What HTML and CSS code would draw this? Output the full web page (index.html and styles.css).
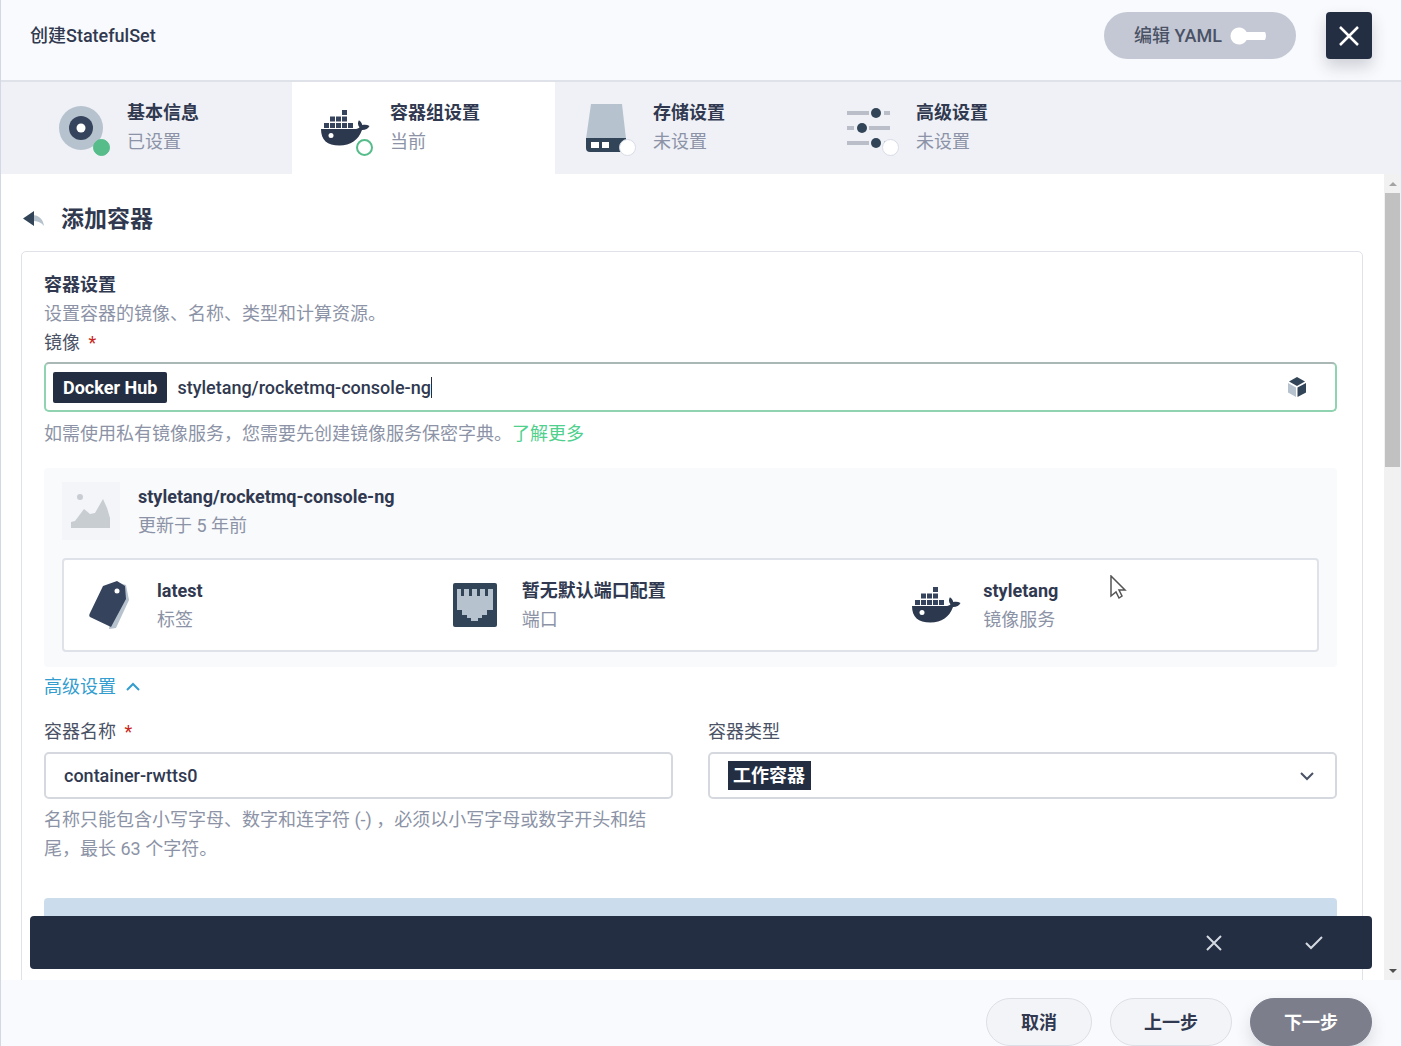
FILE: index.html
```html
<!DOCTYPE html>
<html lang="zh-CN">
<head>
<meta charset="utf-8">
<meta name="viewport" content="width=device-width, initial-scale=1">
<title>创建StatefulSet</title>
<link rel="stylesheet" href="styles.css">
</head>
<body>
<svg class="defs" aria-hidden="true">
  <symbol id="docker" viewBox="0 0 49 36">
    <path d="M21 0h5v5h-5zM9 6.500h5v5H9zM15 6.500h5v5h-5zM21 6.500h5v5h-5zM3 13h5v5H3zM9 13h5v5H9zM15 13h5v5h-5zM21 13h5v5h-5zM27 13h5v5h-5z" fill="#36435c"/>
    <path d="M0 19h33.500c2.500 0 4.300-.8 5-1.800-1.800-2-2-4.700-.6-7 2 1.200 3.100 3 3.300 4.800 2.500-.7 5.200-.4 7.300.9-1.300 2.900-4.100 4.200-7.500 4.100C37.500 30 29.500 35.500 18.500 35.500 6 35.500 0 30 0 19z" fill="#2c384e"/>
    <circle cx="10" cy="25.500" r="2.500" fill="#fff"/>
  </symbol>
</svg>

<div class="dialog">
  <header class="header">
    <h1 class="header-title">创建StatefulSet</h1>
    <label class="yaml">编辑 YAML <input class="switch" type="checkbox" role="switch"></label>
    <button class="close" type="button" aria-label="关闭">
      <svg width="22" height="22" viewBox="0 0 22 22"><path d="M2 2l18 18M20 2L2 20" stroke="#fff" stroke-width="2.500"/></svg>
    </button>
  </header>

  <nav class="tabs" aria-label="步骤">
    <div class="tab">
      <span class="tab-icon">
        <svg width="48" height="48" viewBox="0 0 48 48"><circle cx="23" cy="24" r="22" fill="#b6c2cd"/><circle cx="23" cy="24" r="12" fill="#36435c"/><circle cx="23" cy="24" r="4.500" fill="#fff"/></svg>
        <span class="dot dot-done"></span>
      </span>
      <span class="pair"><strong>基本信息</strong><span>已设置</span></span>
    </div>
    <div class="tab tab-active" aria-current="step">
      <span class="tab-icon">
        <svg width="49" height="36"><use href="#docker"/></svg>
        <span class="dot dot-current"></span>
      </span>
      <span class="pair"><strong>容器组设置</strong><span>当前</span></span>
    </div>
    <div class="tab">
      <span class="tab-icon">
        <svg width="48" height="48" viewBox="0 0 48 48"><path d="M7 0h31l4 35H2z" fill="#b6c2cd"/><path d="M2 34h40v14H6a4 4 0 0 1-4-4z" fill="#324558"/><path d="M7 38h8v6H7zM18 38h7v6h-7z" fill="#fff"/></svg>
        <span class="dot"></span>
      </span>
      <span class="pair"><strong>存储设置</strong><span>未设置</span></span>
    </div>
    <div class="tab">
      <span class="tab-icon">
        <svg width="48" height="48" viewBox="0 0 48 48"><path d="M0 9h22M37 9h6M0 24h7M22 24h21M0 39h22M37 39h6" stroke="#b9bec9" stroke-width="4"/><circle cx="29" cy="9" r="5" fill="#324558"/><circle cx="15" cy="24" r="5" fill="#324558"/><circle cx="29" cy="39" r="5" fill="#324558"/></svg>
        <span class="dot"></span>
      </span>
      <span class="pair"><strong>高级设置</strong><span>未设置</span></span>
    </div>
  </nav>

  <div class="body">
    <main class="content">
      <div class="back-row">
        <button class="back" type="button" aria-label="返回">
          <svg width="22" height="18" viewBox="0 0 22 18"><path d="M9 5c7 0 11 4 12 11-3-4-7-5-12-5z" fill="#b6c2cd"/><path d="M0 8.500L11 1v15z" fill="#324558"/></svg>
        </button>
        <h2>添加容器</h2>
      </div>

      <form class="card">
        <div class="pair"><strong>容器设置</strong><span>设置容器的镜像、名称、类型和计算资源。</span></div>
        <label class="label" for="image">镜像 <i>*</i></label>
        <div class="image-field">
          <span class="hub">Docker Hub</span>
          <input id="image" class="image-input" type="text" value="styletang/rocketmq-console-ng">
          <span class="caret"></span>
          <button class="cube" type="button" aria-label="选择镜像">
            <svg width="18" height="20" viewBox="0 0 18 20"><path d="M9 0l8 4.500L9 9 1 4.500z" fill="#324558"/><path d="M0 6l8 4.500V20l-8-4.500z" fill="#b6c2cd"/><path d="M9.500 10.500L18 6v9.500L9.500 20z" fill="#324558"/></svg>
          </button>
        </div>
        <p class="help">如需使用私有镜像服务，您需要先创建镜像服务保密字典。<a href="#">了解更多</a></p>

        <section class="image-card">
          <div class="image-head">
            <span class="thumb">
              <svg width="40" height="36" viewBox="0 0 40 36"><circle cx="9" cy="4" r="3" fill="#c9ccd3"/><path d="M0 35v-6l4-1 9-12 6 5 5-1 8-14 4 9 3 10v10z" fill="#c8cdd2"/></svg>
            </span>
            <div class="pair"><strong>styletang/rocketmq-console-ng</strong><span>更新于 5 年前</span></div>
          </div>
          <div class="facts">
            <div class="fact">
              <span class="fact-icon"><svg width="48" height="48" viewBox="0 0 48 48"><path d="M29 1l10 3 3 15-13 28-7 1z" fill="#b6c2cd"/><path d="M16 5l14-5 8 5 1 13-15 28L3 36c-1-1-1-2 0-4z" fill="#36435c"/><circle cx="30" cy="10" r="2.500" fill="#fff"/></svg></span>
              <div class="pair"><strong>latest</strong><span>标签</span></div>
            </div>
            <div class="fact">
              <span class="fact-icon"><svg width="48" height="48" viewBox="0 0 48 48"><rect x="2" y="2" width="44" height="44" rx="2" fill="#324558"/><path d="M6 8h4v7h3V8h5v7h3V8h5v7h3V8h5v7h3V8h5v21h-6v5h-5v3h-4v3h-7v-3h-4v-3h-5v-5H6z" fill="#b6c2cd"/></svg></span>
              <div class="pair"><strong>暂无默认端口配置</strong><span>端口</span></div>
            </div>
            <div class="fact">
              <span class="fact-icon"><svg width="49" height="36"><use href="#docker"/></svg></span>
              <div class="pair"><strong>styletang</strong><span>镜像服务</span></div>
              <svg class="pointer" width="18" height="25" viewBox="0 0 18 25" aria-hidden="true"><path d="M2 1v20l5-4 3 6 3-2-3-6h6z" fill="#fff" stroke="#555" stroke-width="1.500"/></svg>
            </div>
          </div>
        </section>

        <button class="advanced" type="button">高级设置
          <svg width="14" height="10" viewBox="0 0 14 10"><path d="M1 8l6-6 6 6" fill="none" stroke="#329dce" stroke-width="2"/></svg>
        </button>

        <div class="fields">
          <div>
            <label class="label" for="name">容器名称 <i>*</i></label>
            <input id="name" class="control" type="text" value="container-rwtts0">
            <p class="help">名称只能包含小写字母、数字和连字符 (-) ，必须以小写字母或数字开头和结尾，最长 63 个字符。</p>
          </div>
          <div>
            <label class="label" for="type">容器类型</label>
            <div class="select">
              <select id="type" class="control"><option>工作容器</option></select>
              <svg width="14" height="10" viewBox="0 0 14 10"><path d="M1 2l6 6 6-6" fill="none" stroke="#4a5266" stroke-width="2"/></svg>
            </div>
          </div>
        </div>
        <div class="notice"></div>
      </form>
    </main>

    <div class="scrollbar" aria-hidden="true">
      <span class="arrow arrow-up"></span>
      <span class="scroll-thumb"></span>
      <span class="arrow arrow-down"></span>
    </div>

    <div class="confirm">
      <button type="button" aria-label="取消编辑"><svg width="16" height="16" viewBox="0 0 16 16"><path d="M1 1l14 14M15 1L1 15" stroke="#d5d9e2" stroke-width="2"/></svg></button>
      <button type="button" aria-label="确认"><svg width="18" height="16" viewBox="0 0 18 16"><path d="M1 8l5 5L17 2" fill="none" stroke="#d5d9e2" stroke-width="2"/></svg></button>
    </div>
  </div>

  <footer class="footer">
    <button class="btn btn-cancel" type="button">取消</button>
    <button class="btn" type="button">上一步</button>
    <button class="btn btn-next" type="button">下一步</button>
  </footer>
</div>
</body>
</html>
```

FILE: styles.css
```css
* { box-sizing: border-box; }

body {
  margin: 0;
  font: 400 18px/29px Roboto, "Noto Sans CJK SC", sans-serif;
  color: #303950;
  background: #f9fafd;
}

h1, h2, p { margin: 0; }
button, input, select { font: inherit; color: inherit; }
button { padding: 0; border: 0; background: none; cursor: pointer; }
svg { display: block; flex: none; }
.defs { position: absolute; width: 0; height: 0; }

.dialog {
  display: flex;
  flex-direction: column;
  height: 100vh;
  border: solid #d3d8e4;
  border-width: 0 1px;
}

.header {
  display: flex;
  align-items: center;
  gap: 30px;
  padding: 12px 29px 21px;
  border-bottom: 2px solid #dfe2e8;
}
.header-title { flex: 1; font-size: 18px; font-weight: 500; }

.yaml {
  display: flex;
  align-items: center;
  justify-content: center;
  gap: 8px;
  width: 192px;
  height: 47px;
  border-radius: 24px;
  background: #c4c8d4;
  font-weight: 500;
  color: #4a5266;
}
.switch {
  appearance: none;
  width: 36px;
  height: 18px;
  margin: 0;
  border-radius: 9px;
  background:
    radial-gradient(circle at 9px 9px, #fff 8px, transparent 9px),
    linear-gradient(#fff, #fff) 12px 5px / 24px 8px no-repeat;
}

.close {
  display: grid;
  place-items: center;
  width: 46px;
  height: 47px;
  border-radius: 4px;
  background: #242e42;
  box-shadow: 0 8px 16px rgba(36, 46, 66, .2);
}

.tabs {
  display: flex;
  padding-left: 28px;
  background: #eff1f7;
}
.tab {
  display: flex;
  gap: 20px;
  width: 263px;
  padding: 16px 0 16px 28px;
}
.tab-active { background: #fff; }
.tab-icon {
  position: relative;
  display: grid;
  place-items: center;
  width: 50px;
  height: 60px;
}
.dot {
  position: absolute;
  right: -3px;
  bottom: 2px;
  width: 17px;
  height: 17px;
  border: 1px solid #d8dce6;
  border-radius: 50%;
  background: #fff;
}
.dot-done { background: #55bc8a; border-color: #55bc8a; }
.dot-current { border: 2px solid #55bc8a; }

.pair { display: flex; flex-direction: column; color: #8c93a6; }
.pair strong { font-weight: 700; color: #303950; }

.body {
  position: relative;
  display: flex;
  flex: 1;
  min-height: 0;
  background: #fff;
}
.content { flex: 1; min-width: 0; overflow: hidden; padding: 26px 21px 0 20px; }

.back-row { display: flex; align-items: center; gap: 16px; height: 38px; margin-bottom: 13px; padding-left: 2px; }
.back-row h2 { font-size: 23px; font-weight: 700; }

.card {
  height: 100%;
  padding: 18px 25px 0 22px;
  border: 1px solid #dfe2e8;
  border-radius: 5px;
}

.label { display: block; color: #4a5266; }
.label i { margin-left: 4px; font-style: normal; color: #ca2621; }

.image-field {
  display: flex;
  align-items: center;
  height: 50px;
  margin: 5px 0 7px;
  padding: 0 29px 0 7px;
  border: 2px solid #8fd3b0;
  border-top-color: #a9b8b4;
  border-radius: 5px;
}
.hub {
  margin-right: 10px;
  padding: 1px 10px;
  border-radius: 2px;
  background: #242e42;
  font-weight: 700;
  color: #fff;
}
.image-input {
  field-sizing: content;
  padding: 0;
  border: 0;
  outline: 0;
  background: none;
  font-weight: 500;
}
.caret { width: 1px; height: 21px; background: #242e42; }
.cube { margin-left: auto; }

.help { color: #8c93a6; }
.help a { color: #4fd08d; text-decoration: none; }

.image-card {
  margin: 20px 0 5px;
  padding: 14px 18px 15px;
  border-radius: 4px;
  background: #f9fafc;
}
.image-head { display: flex; gap: 18px; margin-bottom: 18px; }
.thumb {
  display: grid;
  place-items: center;
  width: 58px;
  height: 58px;
  background: #f3f5f8;
}
.facts {
  display: grid;
  grid-template-columns: 388fr 463fr 406fr;
  height: 94px;
  border: 2px solid #dfe2e8;
  border-radius: 4px;
  background: #fff;
}
.fact { position: relative; display: flex; align-items: center; gap: 22px; }
.fact:first-child { padding-left: 22px; }
.fact-icon { display: grid; place-items: center; width: 49px; height: 49px; }
.pointer { position: absolute; left: 197px; top: 15px; }

.advanced { display: flex; align-items: center; gap: 10px; color: #329dce; }

.fields {
  display: grid;
  grid-template-columns: 1fr 1fr;
  gap: 35px;
  margin: 16px 0 35px;
}
.control {
  display: block;
  width: 100%;
  height: 47px;
  margin: 6px 0;
  padding: 0 18px;
  border: 2px solid #d5d8de;
  border-radius: 5px;
  outline: 0;
  background: #fff;
  font-weight: 500;
}
.select { display: grid; align-items: center; }
.select > * { grid-area: 1 / 1; }
.select svg { justify-self: end; margin-right: 23px; pointer-events: none; }
.select .control {
  appearance: none;
  padding: 0 23px;
  background: linear-gradient(#242e42, #242e42) 18px 7px / 83px 29px no-repeat;
  font-weight: 700;
  color: #fff;
}

.notice { height: 60px; border-radius: 4px; background: #cbddec; }

.scrollbar {
  display: flex;
  flex-direction: column;
  align-items: center;
  width: 17px;
  background: #f1f1f1;
}
.arrow { border: 4px solid transparent; }
.arrow-up { margin: 4px 0; border-bottom-color: #a3a3a3; }
.arrow-down { margin: auto 0 3px; border-top-color: #505050; }
.scroll-thumb { width: 15px; height: 34%; margin-top: 3px; background: #c1c1c1; }

.confirm {
  position: absolute;
  right: 29px;
  bottom: 11px;
  left: 29px;
  display: flex;
  justify-content: flex-end;
  height: 53px;
  padding-right: 8px;
  border-radius: 4px;
  background: #242e42;
}
.confirm button { display: grid; place-items: center; width: 100px; }

.footer {
  display: flex;
  justify-content: flex-end;
  gap: 18px;
  padding: 18px 29px 0;
}
.btn {
  width: 122px;
  height: 48px;
  border: 1px solid #dcdfe6;
  border-radius: 24px;
  background: #f3f4f8;
  font-weight: 700;
}
.btn-cancel { width: 106px; }
.btn-next {
  border-color: #7c7e8c;
  background: #7c7e8c;
  box-shadow: 0 8px 16px rgba(36, 46, 66, .15);
  color: #fff;
}
```
